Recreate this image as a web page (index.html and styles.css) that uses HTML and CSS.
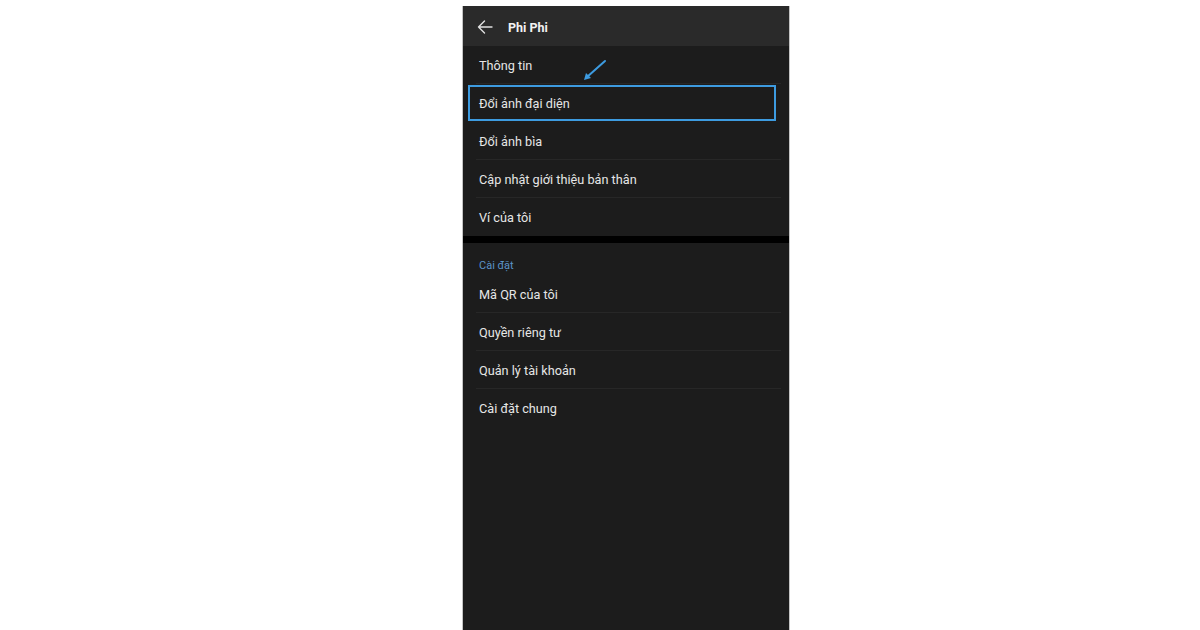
FILE: index.html
```html
<!DOCTYPE html>
<html lang="vi">
<head>
  <meta charset="UTF-8" />
  <meta name="viewport" content="width=device-width, initial-scale=1.0" />
  <title>Phi Phi</title>
  <link rel="stylesheet" href="styles.css">
</head>
<body>
  <div class="phone">
    <div class="header">
      <svg class="back" width="16" height="14" viewBox="0 0 16 14">
        <path d="M15 7H1.5M7.5 1L1.5 7l6 6" fill="none" stroke="#e0e0e0" stroke-width="1.4" stroke-linecap="round" stroke-linejoin="round"/>
      </svg>
      <span class="title">Phi Phi</span>
    </div>

    <div class="group">
      <div class="row">Thông tin</div>
      <div class="row active">Đổi ảnh đại diện</div>
      <div class="row">Đổi ảnh bìa</div>
      <div class="row">Cập nhật giới thiệu bản thân</div>
      <div class="row last">Ví của tôi</div>
    </div>

    <div class="band"></div>

    <div class="group">
      <div class="section-label">Cài đặt</div>
      <div class="row">Mã QR của tôi</div>
      <div class="row">Quyền riêng tư</div>
      <div class="row">Quản lý tài khoản</div>
      <div class="row last">Cài đặt chung</div>
    </div>

    <svg class="pointer" width="30" height="26" viewBox="0 0 30 26">
      <path d="M25 3L7 19" stroke="#3d9be0" stroke-width="2" stroke-linecap="round"/>
      <path d="M4 22l2-7 5 5z" fill="#3d9be0"/>
    </svg>
  </div>
</body>
</html>
```

FILE: styles.css
```css
body {
  margin: 0;
  background: #fff;
  font-family: Roboto, "Noto Sans", sans-serif;
  height: 630px;
  overflow: hidden;
}

.phone {
  position: relative;
  margin: 6px 0 0 462px;
  width: 326px;
  height: 624px;
  background: #1c1c1c;
  border-left: 1px solid #c4c4c4;
  border-right: 1px solid #c4c4c4;
}

.header {
  height: 40px;
  box-sizing: border-box;
  padding: 2px 0 0 14px;
  background: #2a2a2a;
  display: flex;
  align-items: center;
  gap: 15px;
}

.title {
  color: #f2f2f2;
  font-size: 12.5px;
  font-weight: 700;
}

.row {
  height: 38px;
  box-sizing: border-box;
  display: flex;
  align-items: center;
  margin: 0 8px 0 13px;
  padding: 1px 0 0 3px;
  border-bottom: 1px solid #272727;
  color: #e6e6e6;
  font-size: 12.7px;
}

.row.last {
  border-bottom: none;
}

.row.active {
  height: 36px;
  margin: 1px 13px 1px 5px;
  padding-left: 9px;
  border: 2px solid #3d9be0;
}

.band {
  height: 7px;
  background: #000;
}

.section-label {
  height: 32px;
  box-sizing: border-box;
  padding: 16px 0 0 16px;
  color: #5b93c8;
  font-size: 11px;
}

.pointer {
  position: absolute;
  left: 117px;
  top: 52px;
}
```
